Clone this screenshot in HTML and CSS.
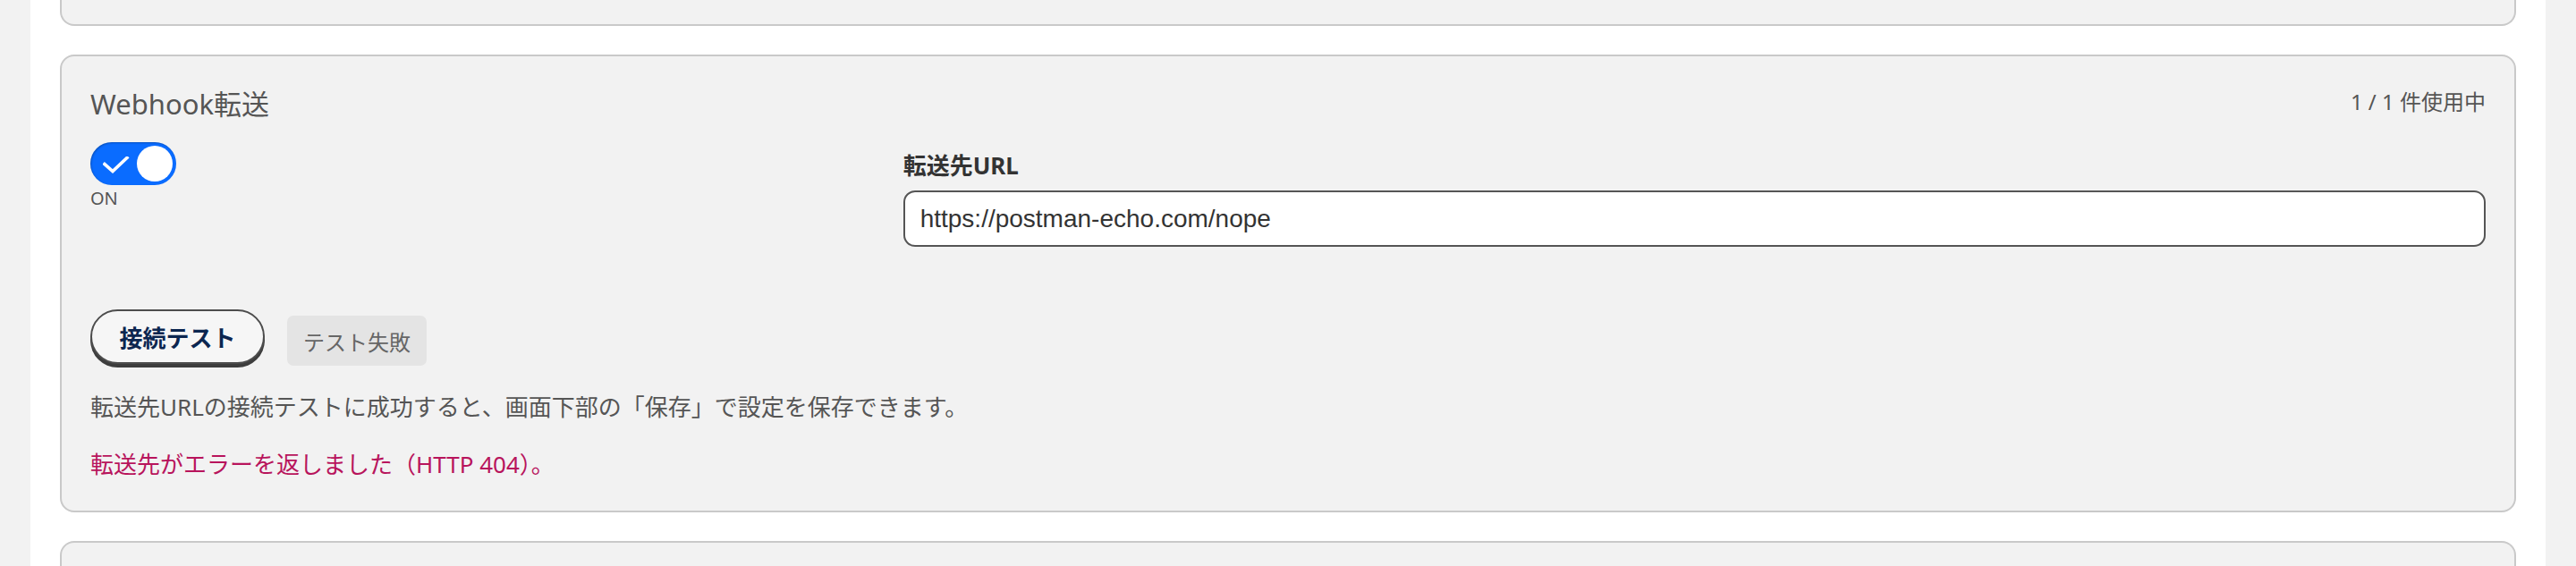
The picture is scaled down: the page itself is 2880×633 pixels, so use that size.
FILE: index.html
```html
<!DOCTYPE html>
<html lang="ja">
<head>
<meta charset="utf-8">
<title>Webhook転送</title>
<link rel="stylesheet" href="styles.css">
</head>
<body>
<div class="panel">
  <div class="card card-stub-top"></div>

  <section class="card">
    <div class="card-head">
      <h2 class="card-title">Webhook転送</h2>
      <span class="usage">1 / 1 件使用中</span>
    </div>

    <div class="card-grid">
      <div class="toggle-col">
        <div class="toggle">
          <svg class="toggle-check" width="30" height="22" viewBox="0 0 30 22">
            <polyline points="2,8.5 11,16.5 27,1.5" fill="none" stroke="#fff" stroke-width="3.6" stroke-linecap="square"/>
          </svg>
          <span class="toggle-knob"></span>
        </div>
        <div class="toggle-label">ON</div>
      </div>

      <div class="field">
        <label class="field-label">転送先URL</label>
        <div class="field-input">https://postman-echo.com/nope</div>
      </div>
    </div>

    <div class="actions">
      <button class="btn-test">接続テスト</button>
      <span class="badge">テスト失敗</span>
    </div>

    <p class="desc">転送先URLの接続テストに成功すると、画面下部の「保存」で設定を保存できます。</p>
    <p class="error">転送先がエラーを返しました（HTTP 404）。</p>
  </section>

  <div class="card card-stub-bottom"></div>
</div>
</body>
</html>
```

FILE: styles.css
```css
* {
  box-sizing: border-box;
}

html, body {
  margin: 0;
  padding: 0;
  height: 633px;
  overflow: hidden;
  background: #f2f2f2;
}

body {
  font-family: "Noto Sans", "Noto Sans CJK JP", sans-serif;
  color: #555;
  padding-left: 34px;
}

.panel {
  width: 2812px;
  height: 633px;
  background: #fff;
  padding: 0 33px;
  display: flex;
  flex-direction: column;
  gap: 32px;
}

.card {
  background: #f2f2f2;
  border: 2px solid #c9c9c9;
  border-radius: 16px;
}

.card-stub-top {
  height: 29px;
  flex: none;
  border-top: 0;
  border-radius: 0 0 16px 16px;
}

.card-stub-bottom {
  flex: 1;
  border-bottom: 0;
  border-radius: 16px 16px 0 0;
}

section.card {
  padding: 32px;
  flex: none;
}

.card-head {
  display: flex;
  justify-content: space-between;
  align-items: center;
  height: 42px;
}

.card-title {
  margin: 0;
  font-weight: 400;
  font-size: 31px;
  line-height: 42px;
  color: #555;
}

.usage {
  font-size: 24px;
  line-height: 36px;
  color: #555;
  margin-top: -4px;
}

.card-grid {
  display: grid;
  grid-template-columns: 1fr 2fr;
  column-gap: 24px;
  margin-top: 22px;
  align-items: start;
}

.toggle {
  position: relative;
  width: 96px;
  height: 48px;
  border-radius: 24px;
  background: #0a6cff;
  box-shadow: inset 1px 1px 2px rgba(0, 0, 0, 0.25);
}

.toggle-check {
  position: absolute;
  left: 14px;
  top: 15.5px;
}

.toggle-knob {
  position: absolute;
  left: 52px;
  top: 4px;
  width: 40px;
  height: 40px;
  border-radius: 50%;
  background: #fff;
}

.toggle-label {
  margin-top: 3px;
  font-size: 20px;
  line-height: 24px;
  color: #555;
}

.field {
  padding-top: 8px;
}

.field-label {
  display: block;
  font-weight: 700;
  font-size: 26px;
  line-height: 36px;
  color: #333;
}

.field-input {
  margin-top: 10px;
  height: 63px;
  border: 2px solid #555;
  border-radius: 13px;
  background: #fff;
  padding: 0 17px;
  display: flex;
  align-items: center;
  font-family: "Liberation Sans", "Noto Sans", sans-serif;
  font-size: 28px;
  color: #333;
}

.actions {
  display: flex;
  align-items: flex-start;
  gap: 25px;
  margin-top: 70px;
}

.btn-test {
  font-family: inherit;
  width: 195px;
  height: 61px;
  margin-bottom: 4px;
  border: 2px solid #4d4d4d;
  border-radius: 31px;
  background: #f6f6f6;
  box-shadow: 0 4px 0 #3d3d3d;
  font-size: 26px;
  font-weight: 700;
  color: #0c2650;
  padding: 0;
}

.badge {
  margin-top: 7px;
  width: 156px;
  height: 56px;
  border-radius: 7px;
  background: #e4e4e4;
  display: flex;
  align-items: center;
  justify-content: center;
  font-size: 24px;
  color: #666;
}

.desc {
  margin: 24px 0 0;
  font-size: 26px;
  line-height: 40px;
  color: #555;
}

.error {
  margin: 24px 0 0;
  font-size: 26px;
  line-height: 40px;
  color: #b8145c;
}
```
